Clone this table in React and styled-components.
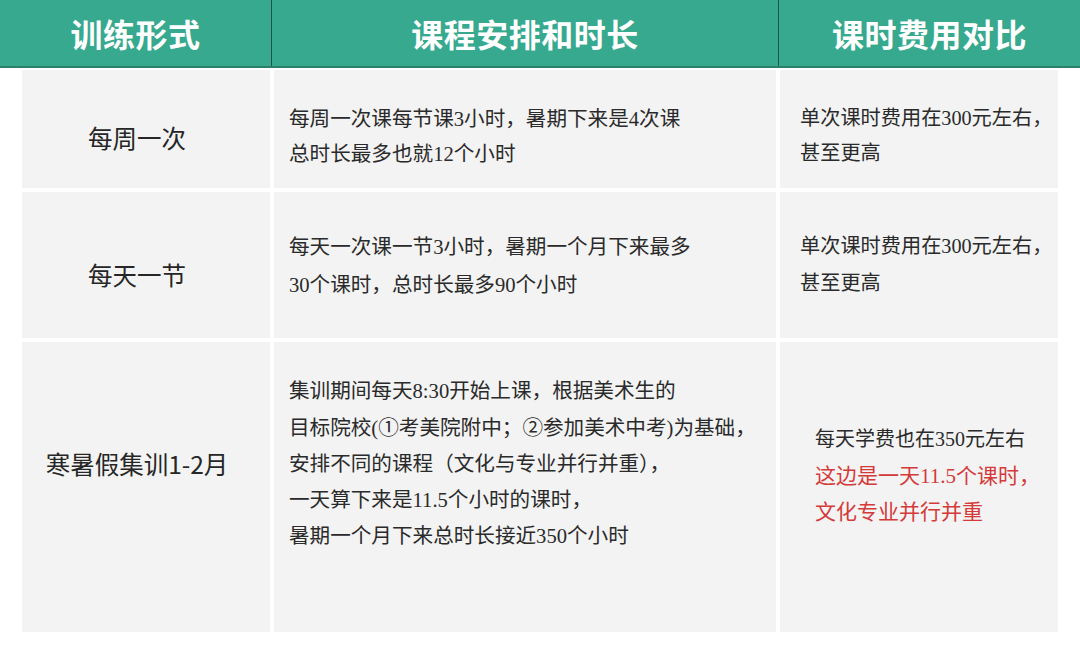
import React from 'react'
import styled, { createGlobalStyle } from 'styled-components'

const GlobalStyle = createGlobalStyle`
  html, body {
    margin: 0;
    padding: 0;
    background: #ffffff;
  }
`

const SERIF = `"Liberation Serif", "Noto Sans CJK SC", serif`
const SANS = `"Noto Sans CJK SC", "Noto Sans", sans-serif`

const Page = styled.div`
  width: 1080px;
  height: 650px;
  background: #ffffff;
  overflow: hidden;
`

const HeaderBar = styled.div`
  display: grid;
  grid-template-columns: 272px 507px 1fr;
  height: 66px;
  background-color: #37a98e;
  border-bottom: 2px solid #2c7f6b;
`

const HeadCell = styled.div`
  display: flex;
  align-items: center;
  justify-content: center;
  color: #ffffff;
  font-family: ${SANS};
  font-weight: 700;
  font-size: 32px;
  letter-spacing: 0.5px;
  border-right: ${p => (p.$divider ? '1px solid #1f5548' : 'none')};
`

const Body = styled.div`
  display: grid;
  grid-template-columns: 248px 502px 278px;
  grid-template-rows: 118px 146px 290px;
  gap: 4px;
  padding: 2px 0 0 22px;
`

const Cell = styled.div`
  background-color: #f3f3f3;
  display: flex;
  flex-direction: column;
  justify-content: center;
  align-items: ${p => (p.$center ? 'center' : 'flex-start')};
  padding: ${p => p.$pt || 0}px ${p => p.$pr || 0}px ${p => p.$pb || 0}px ${p => p.$pl || 0}px;
  box-sizing: border-box;
`

const Kind = styled.div`
  font-family: ${SANS};
  font-size: 24.5px;
  color: #262626;
  white-space: nowrap;
`

const Lines = styled.div`
  font-family: ${SERIF};
  font-size: ${p => p.$size || 20}px;
  line-height: ${p => p.$lh || 36}px;
  color: ${p => p.$color || '#2a2a2a'};
  white-space: nowrap;
`

const rows = [
  {
    kind: '每周一次',
    kindPad: { $pt: 16 },
    plan: ['每周一次课每节课3小时，暑期下来是4次课', '总时长最多也就12个小时'],
    planPad: { $pt: 16 },
    planLh: 35,
    fee: ['单次课时费用在300元左右，', '甚至更高'],
    feePad: { $pt: 14 },
    feeLh: 35,
  },
  {
    kind: '每天一节',
    kindPad: { $pt: 18 },
    plan: ['每天一次课一节3小时，暑期一个月下来最多', '30个课时，总时长最多90个小时'],
    planPad: { $pt: 2 },
    planLh: 38,
    fee: ['单次课时费用在300元左右，', '甚至更高'],
    feePad: {},
    feeLh: 37,
  },
]

export default function App() {
  return (
    <Page>
      <GlobalStyle />
      <HeaderBar>
        <HeadCell $divider>训练形式</HeadCell>
        <HeadCell $divider>课程安排和时长</HeadCell>
        <HeadCell>课时费用对比</HeadCell>
      </HeaderBar>
      <Body>
        {rows.map(r => (
          <React.Fragment key={r.kind}>
            <Cell $center $pr={18} {...r.kindPad}>
              <Kind>{r.kind}</Kind>
            </Cell>
            <Cell $pl={15} {...r.planPad}>
              <Lines $size={20.6} $lh={r.planLh}>
                {r.plan.map(l => <div key={l}>{l}</div>)}
              </Lines>
            </Cell>
            <Cell $pl={20} {...r.feePad}>
              <Lines $size={20.2} $lh={r.feeLh}>
                {r.fee.map(l => <div key={l}>{l}</div>)}
              </Lines>
            </Cell>
          </React.Fragment>
        ))}

        <Cell $center $pr={18} $pb={48}>
          <Kind>寒暑假集训1-2月</Kind>
        </Cell>
        <Cell $pl={15} $pb={46}>
          <Lines $size={20.6} $lh={36.3}>
            <div>集训期间每天8:30开始上课，根据美术生的</div>
            <div>目标院校(①考美院附中；②参加美术中考)为基础，</div>
            <div>安排不同的课程（文化与专业并行并重），</div>
            <div>一天算下来是11.5个小时的课时，</div>
            <div>暑期一个月下来总时长接近350个小时</div>
          </Lines>
        </Cell>
        <Cell $pl={35} $pb={24}>
          <Lines $lh={37}>
            <div>每天学费也在350元左右</div>
          </Lines>
          <Lines $lh={36} $size={21} $color="#d43a3a">
            <div>这边是一天11.5个课时，</div>
            <div>文化专业并行并重</div>
          </Lines>
        </Cell>
      </Body>
    </Page>
  )
}
